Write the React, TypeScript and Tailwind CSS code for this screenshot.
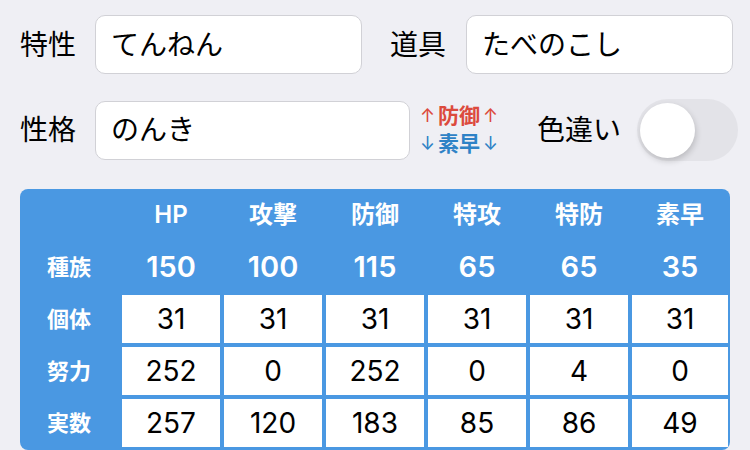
import React from "react";

const stats = ["HP", "攻撃", "防御", "特攻", "特防", "素早"];
const base = [150, 100, 115, 65, 65, 35];
const iv = [31, 31, 31, 31, 31, 31];
const ev = [252, 0, 252, 0, 4, 0];
const real = [257, 120, 183, 85, 86, 49];

const font = { fontFamily: '"Inter", "Noto Sans CJK JP", sans-serif' };

function Field({ value, width }: { value: string; width: string }) {
  return (
    <div
      className={`${width} h-[59px] bg-white border border-[#d1d1d6] rounded-[10px] flex items-center pl-[15px] text-[28px] text-black`}
    >
      {value}
    </div>
  );
}

function Toggle() {
  return (
    <div className="w-[101px] h-[62px] rounded-full bg-[#e3e3e8] px-[3px] flex items-center shrink-0">
      <div className="w-[55px] h-[55px] rounded-full bg-white shadow-[1px_3px_6px_rgba(0,0,0,0.18)]" />
    </div>
  );
}

export default function App() {
  return (
    <div className="w-[750px] h-[450px] bg-[#efeff4] overflow-hidden" style={font}>
      <div className="flex items-center pt-[15px] pl-[20px]">
        <span className="text-[28px] text-black w-[62px] shrink-0">特性</span>
        <div className="ml-[13px]">
          <Field value="てんねん" width="w-[267px]" />
        </div>
        <span className="text-[28px] text-black ml-[28px] w-[62px] shrink-0">道具</span>
        <div className="ml-[14px]">
          <Field value="たべのこし" width="w-[267px]" />
        </div>
      </div>

      <div className="flex items-center mt-[25px] pl-[20px]">
        <span className="text-[28px] text-black w-[62px] shrink-0">性格</span>
        <div className="ml-[13px]">
          <Field value="のんき" width="w-[315px]" />
        </div>
        <div className="ml-[10px] flex flex-col text-[21px] font-bold leading-[28px] w-[80px] shrink-0">
          <div className="flex items-center text-[#dc4a3d]">
            <span className="font-normal text-[18px]">↑</span>
            <span className="mx-[3px]">防御</span>
            <span className="font-normal text-[18px]">↑</span>
          </div>
          <div className="flex items-center text-[#2e82c6]">
            <span className="font-normal text-[18px]">↓</span>
            <span className="mx-[3px]">素早</span>
            <span className="font-normal text-[18px]">↓</span>
          </div>
        </div>
        <span className="text-[28px] text-black ml-[37px] w-[92px] shrink-0">色違い</span>
        <div className="ml-[8px]">
          <Toggle />
        </div>
      </div>

      <div className="mt-[28px] ml-[20px] w-[710px] bg-[#4a98e2] rounded-[8px] overflow-hidden pt-[2px] pb-[3px] pr-[2px] grid grid-cols-[repeat(6,98px)_96px] auto-rows-[48px] gap-[4px]">
        <div />
        {stats.map((s) => (
          <div key={s} className="flex items-center justify-center text-white text-[24px] font-semibold">
            {s}
          </div>
        ))}

        <div className="flex items-center justify-center text-white text-[22px] font-bold">種族</div>
        {base.map((v, i) => (
          <div key={i} className="flex items-center justify-center text-white text-[29px] font-semibold">
            {v}
          </div>
        ))}

        {[
          ["個体", iv],
          ["努力", ev],
          ["実数", real],
        ].map(([label, row]) => (
          <React.Fragment key={label as string}>
            <div className="flex items-center justify-center text-white text-[22px] font-bold">
              {label as string}
            </div>
            {(row as number[]).map((v, i) => (
              <div key={i} className="bg-white flex items-center justify-center text-black text-[28px]">
                {v}
              </div>
            ))}
          </React.Fragment>
        ))}
      </div>
    </div>
  );
}
